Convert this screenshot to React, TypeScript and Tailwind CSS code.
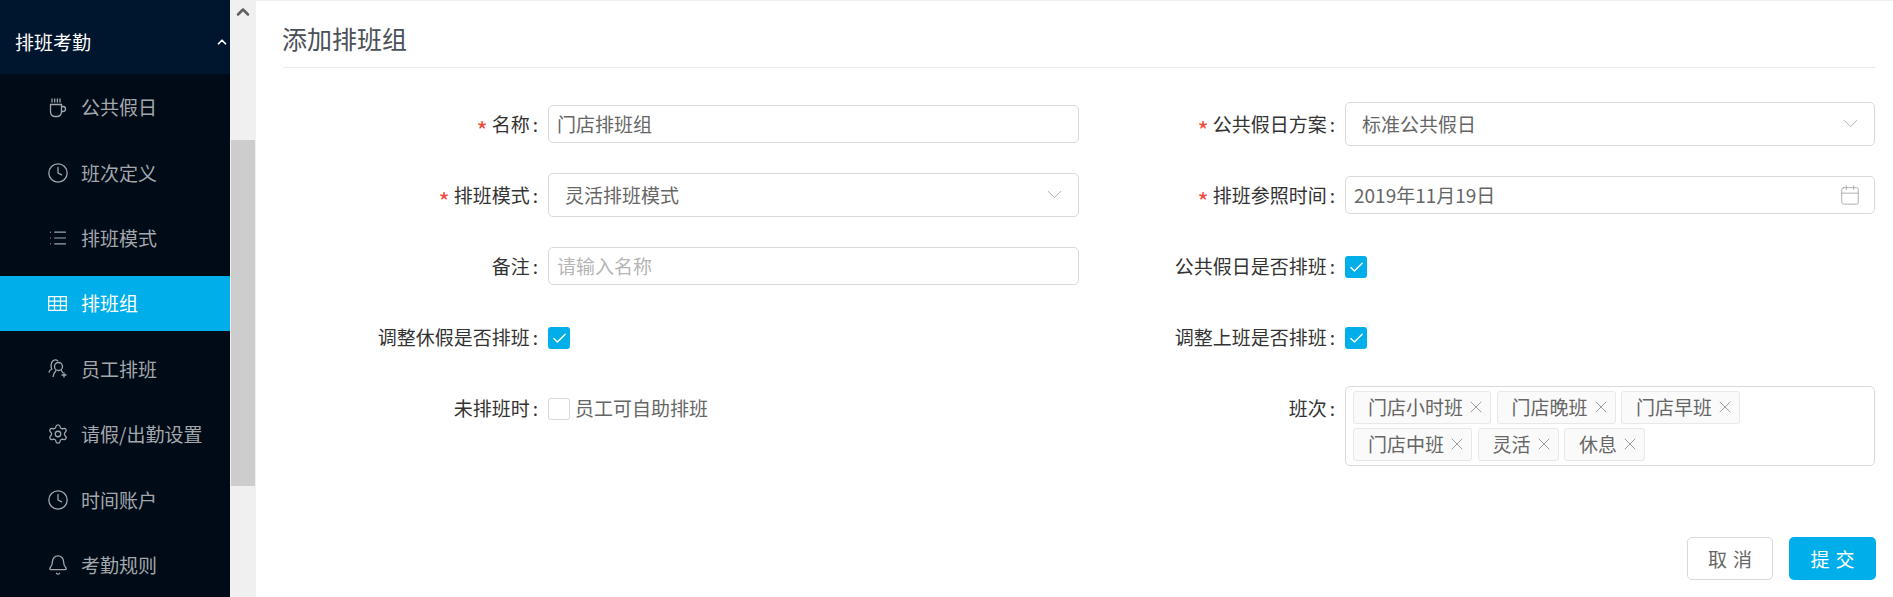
import { Bell, Calendar, Check, ChevronDown, ChevronUp, Clock, List, Settings, X } from "lucide-react";
import type { ReactNode } from "react";

const CupIcon = () => (
  <svg width="19" height="21" viewBox="0 0 19 21" fill="none" stroke="currentColor" strokeWidth="1.3" className="shrink-0">
    <path d="M2.500 7.500h11v7.500a4.500 4.500 0 0 1-4.500 4.500H7a4.500 4.500 0 0 1-4.500-4.500z" />
    <path d="M13.500 9.500h1.500a2.500 2.500 0 0 1 0 5h-1.500" />
    <path d="M4 1.500v4M6.700 1.500v4M9.400 1.500v4M12 1.500v4" />
  </svg>
);

const TableIcon = () => (
  <svg width="19" height="19" viewBox="0 0 19 19" fill="none" stroke="currentColor" strokeWidth="1.3" className="shrink-0">
    <path d="M.7 2.700h17.600v13.600H.7zM.7 7.200h17.600M.7 11.700h17.600M6.500 2.700v13.600M12.500 2.700v13.600" />
  </svg>
);

const UserIcon = () => (
  <svg width="19" height="19" viewBox="0 0 19 19" fill="none" stroke="currentColor" strokeWidth="1.3" className="shrink-0">
    <path d="M.8 13.500c.6-1.700 1.700-2.800 3-3.500C2.600 8 2.800 3.600 5 1.800c1.500-1.100 3.700-.9 5 .3" />
    <circle cx="10.500" cy="7.500" r="4" />
    <path d="M5 18c.5-2.800 1.700-5 3-6.500M13 11l2 3M16 13.500v5M13.500 16h5" />
  </svg>
);

const iconProps = { size: 22, strokeWidth: 1.4, className: "shrink-0" };

const menuItems = [
  { label: "公共假日", icon: <CupIcon /> },
  { label: "班次定义", icon: <Clock {...iconProps} /> },
  { label: "排班模式", icon: <List size={20} strokeWidth={1.4} className="shrink-0" /> },
  { label: "排班组", icon: <TableIcon />, active: true },
  { label: "员工排班", icon: <UserIcon /> },
  { label: "请假/出勤设置", icon: <Settings {...iconProps} /> },
  { label: "时间账户", icon: <Clock {...iconProps} /> },
  { label: "考勤规则", icon: <Bell {...iconProps} /> },
];

const Sidebar = () => (
  <aside className="w-[230px] shrink-0 h-full overflow-hidden bg-[#000b18]">
    <div className="h-[74px] bg-[#00152e] flex items-center justify-between pl-[15px] pr-[1px] pt-[9px] text-white">
      <span>排班考勤</span>
      <ChevronUp size={14} strokeWidth={3} />
    </div>
    <nav className="pt-[6px]">
      {menuItems.map((item) => (
        <div
          key={item.label}
          className={
            "h-[54.700px] mb-[10.700px] flex items-center pl-12 gap-[14px] " +
            (item.active ? "bg-[#00aeea] text-white" : "text-[#a3a7ab]")
          }
        >
          <div className="w-[19px] flex justify-center">{item.icon}</div>
          <span>{item.label}</span>
        </div>
      ))}
    </nav>
  </aside>
);

const Scrollbar = () => (
  <div className="w-[26px] shrink-0 h-full bg-[#f0f0f0] pl-[1px] pr-[1px]">
    <div className="h-[23px] flex items-center justify-center text-[#5f5f5f]">
      <ChevronUp size={20} strokeWidth={3} />
    </div>
    <div className="mt-[117px] h-[346px] bg-[#cdcdcd]" />
  </div>
);

const Field = ({ label, required, children, start }: { label: string; required?: boolean; children: ReactNode; start?: boolean }) => (
  <div className="h-[71px] flex items-center">
    <div className="w-[265px] h-[26px] shrink-0 pr-[10px] flex justify-end text-[#333333]">
      {required && <span className="text-[#f5483b] text-[24px] mt-[6px] mr-[4px]">*</span>}
      <span>{label}</span>
      <span className="ml-[3px]">:</span>
    </div>
    <div className={"flex-1 min-w-0 " + (start ? "self-start mt-[13.500px]" : "")}>{children}</div>
  </div>
);

const TextInput = ({ value, placeholder }: { value?: string; placeholder?: string }) => (
  <input
    readOnly
    value={value ?? ""}
    placeholder={placeholder}
    className="w-full h-[38px] border border-[#d9d9d9] rounded-[5px] px-2 text-[#666666] placeholder:text-[#b5b5b5] outline-none"
  />
);

const SelectBox = ({ value }: { value: string }) => (
  <div className="h-[44px] border border-[#d9d9d9] rounded-[5px] pl-4 pr-[11px] flex items-center justify-between text-[#666666]">
    <span>{value}</span>
    <ChevronDown size={25} strokeWidth={0.9} className="text-[#a8a8a8]" />
  </div>
);

const CheckBox = ({ checked }: { checked?: boolean }) =>
  checked ? (
    <div className="w-[22px] h-[22px] mt-[3px] rounded-[3px] bg-[#00aeea] flex items-center justify-center text-white">
      <Check size={17} strokeWidth={2} />
    </div>
  ) : (
    <div className="w-[22px] h-[22px] mt-[3px] rounded-[3px] border border-[#d9d9d9] bg-white" />
  );

const shifts = [
  ["门店小时班", "门店晚班", "门店早班"],
  ["门店中班", "灵活", "休息"],
];

const ShiftTag = ({ name }: { name: string }) => (
  <div className="h-[33px] border border-[#e8e8e8] bg-[#fafafa] rounded-[3px] pl-[14px] pr-[4px] flex items-center gap-[3px] text-[#666666]">
    <span>{name}</span>
    <X size={20} strokeWidth={1} className="text-[#8c8c8c]" />
  </div>
);

export default function App() {
  return (
    <div
      className="w-[1893px] h-[597px] flex overflow-hidden bg-white text-[19px] leading-[26px]"
      style={{ fontFamily: '"Noto Sans CJK SC", "Liberation Sans", sans-serif' }}
    >
      <Sidebar />
      <Scrollbar />
      <main className="flex-1 min-w-0 border-t border-[#f0f0f0] pl-[27px] pr-[17px]">
        <div className="h-[67px] border-b border-[#ebebeb] flex items-center pt-[7px]">
          <h1 className="text-[25px] text-[#4a5058] font-normal -ml-[1px]">添加排班组</h1>
        </div>
        <div className="h-[469px] pt-[20px]">
          <div className="grid grid-cols-[796px_795px] gap-x-[1px]">
            <div>
              <Field label="名称" required><TextInput value="门店排班组" /></Field>
              <Field label="排班模式" required><SelectBox value="灵活排班模式" /></Field>
              <Field label="备注"><TextInput placeholder="请输入名称" /></Field>
              <Field label="调整休假是否排班"><CheckBox checked /></Field>
              <Field label="未排班时">
                <div className="flex items-center gap-[5px] text-[#666666]">
                  <CheckBox />
                  <span>员工可自助排班</span>
                </div>
              </Field>
            </div>
            <div>
              <Field label="公共假日方案" required><SelectBox value="标准公共假日" /></Field>
              <Field label="排班参照时间" required>
                <div className="h-[38px] border border-[#d9d9d9] rounded-[5px] pl-2 pr-[13px] flex items-center justify-between text-[#666666]">
                  <span>2019年11月19日</span>
                  <Calendar size={22} strokeWidth={0.9} className="text-[#a0a0a0]" />
                </div>
              </Field>
              <Field label="公共假日是否排班"><CheckBox checked /></Field>
              <Field label="调整上班是否排班"><CheckBox checked /></Field>
              <Field label="班次" start>
                <div className="h-[80px] border border-[#d9d9d9] rounded-[5px] pl-[7px] pt-[4px] flex flex-col gap-[4px]">
                  {shifts.map((row) => (
                    <div key={row[0]} className="flex gap-[5.500px]">
                      {row.map((name) => <ShiftTag key={name} name={name} />)}
                    </div>
                  ))}
                </div>
              </Field>
            </div>
          </div>
        </div>
        <div className="flex justify-end gap-4">
          <button className="w-[86px] h-[43px] pl-[6px] border border-[#d9d9d9] rounded-[5px] bg-white text-[#666666] tracking-[6px]">取消</button>
          <button className="w-[87px] h-[43px] pl-[6px] rounded-[5px] bg-[#00aeea] text-white tracking-[6px]">提交</button>
        </div>
      </main>
    </div>
  );
}
